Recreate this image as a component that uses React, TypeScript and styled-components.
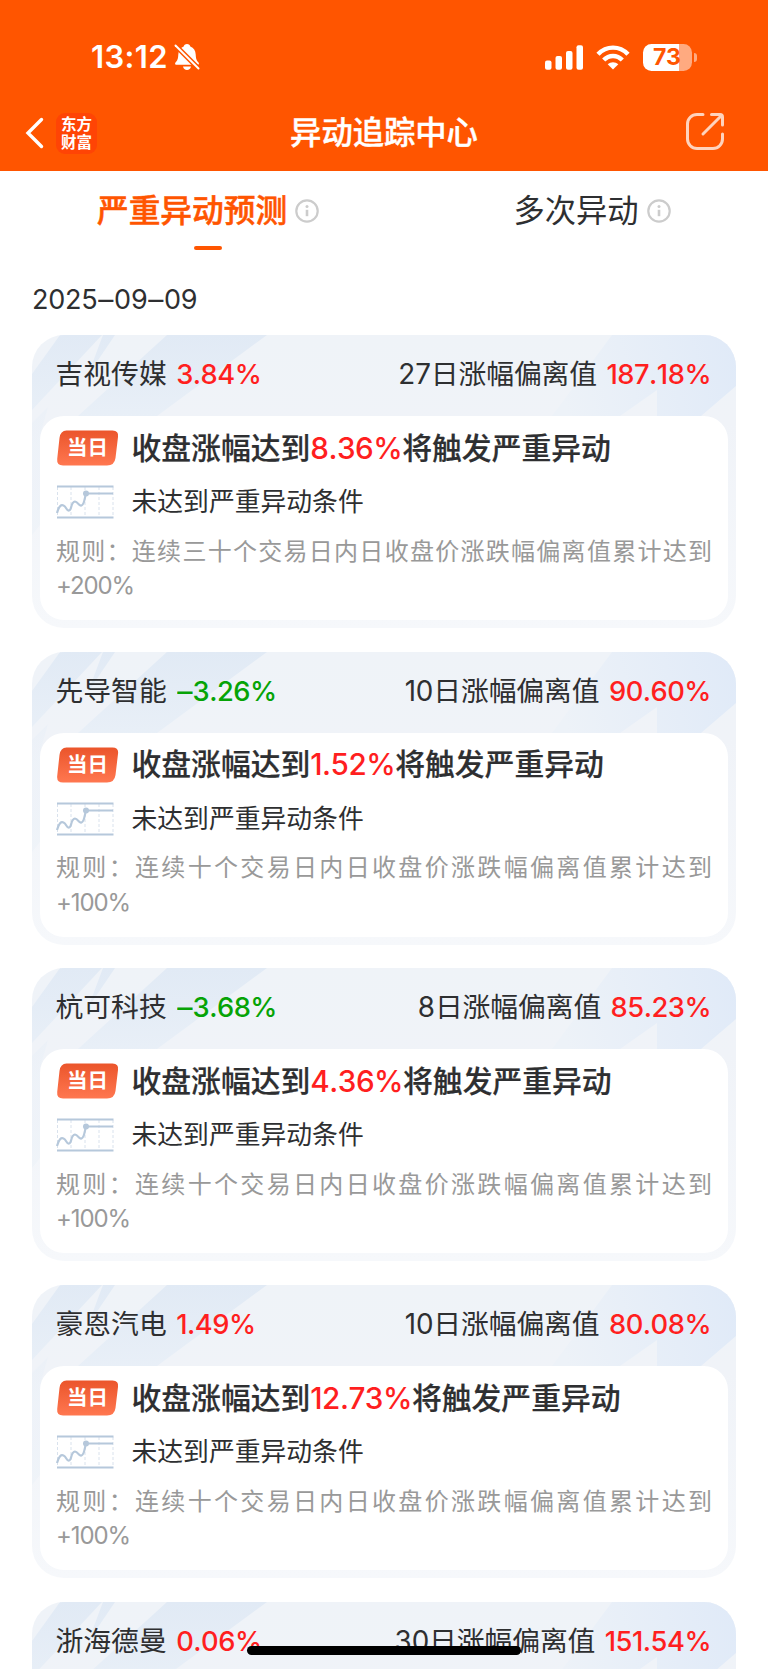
import React from "react";
import styled, { createGlobalStyle } from "styled-components";

const GlobalStyle = createGlobalStyle`
  * { box-sizing: border-box; }
  html, body { margin: 0; padding: 0; background: #fff; }
  body {
    height: 1669px;
    overflow: hidden;
    font-family: Inter, "Noto Sans CJK SC", sans-serif;
    color: #2e2f31;
  }
`;

const Screen = styled.main`
  position: relative;
  width: 768px;
  height: 1669px;
  overflow: hidden;
  background: #fff;
`;

const Header = styled.header`
  height: 171px;
  background: #ff5500;
  color: #fff;
`;

const StatusBar = styled.div`
  display: flex;
  justify-content: space-between;
  height: 95px;
  padding: 19px 71px 0 91px;
`;

const StatusGroup = styled.div<{ $gap: number }>`
  display: flex;
  align-items: center;
  height: 76px;
  gap: ${(p) => p.$gap}px;
`;

const Clock = styled.span`
  width: 77px;
  font-size: 31px;
  font-weight: 600;
  line-height: 40px;
  letter-spacing: 0.35px;
  white-space: nowrap;
`;

const Battery = styled.div`
  display: flex;
  align-items: center;
  gap: 2px;
`;

const BatteryBody = styled.div`
  width: 49px;
  height: 27px;
  padding-right: 1px;
  border-radius: 8.5px;
  background: linear-gradient(90deg, #fff 73%, #ffaa80 73%);
  color: #ff5500;
  font-size: 23px;
  font-weight: 700;
  line-height: 27px;
  text-align: center;
`;

const BatteryCap = styled.div`
  width: 3px;
  height: 9px;
  border-radius: 0 4px 4px 0;
  background: #ffaa80;
`;

const NavBar = styled.div`
  display: grid;
  grid-template-columns: 1fr auto 1fr;
  align-items: center;
  height: 76px;
  padding: 0 43px 0 25px;
`;

const NavStart = styled.div`
  display: flex;
  align-items: center;
  gap: 11px;
`;

const NavEnd = styled.div`
  display: flex;
  justify-content: flex-end;
  margin-top: -3px;
`;

const BrandMark = styled.div`
  display: flex;
  flex-direction: column;
  align-items: center;
  width: 41px;
  height: 41px;
  padding-top: 1px;
  border-radius: 9px;
  background: #ff4405;
  font-family: "Noto Sans CJK SC", sans-serif;
  font-size: 15.5px;
  font-weight: 700;
  line-height: 18px;
`;

const PageTitle = styled.h1`
  margin: 0 0 0 18px;
  font-size: 31.3px;
  font-weight: 500;
  line-height: 46px;
  -webkit-text-stroke: 0.4px currentColor;
`;

const Tabs = styled.nav`
  display: grid;
  grid-template-columns: 1fr 1fr;
  height: 101px;
`;

const Tab = styled.div<{ $active?: boolean }>`
  display: flex;
  flex-direction: column;
  align-items: center;
  padding: 17px 0 0 32px;
  color: ${(p) => (p.$active ? "#ff5500" : "#2e2f31")};
  font-size: ${(p) => (p.$active ? 31.7 : 31.3)}px;
  font-weight: ${(p) => (p.$active ? 500 : 400)};
  -webkit-text-stroke: ${(p) => (p.$active ? "0.5px currentColor" : "0")};
`;

const TabLabel = styled.div`
  display: flex;
  align-items: center;
  gap: 8px;
  line-height: 46px;
`;

const TabIndicator = styled.div`
  width: 28px;
  height: 4px;
  margin-top: 12px;
  border-radius: 2px;
  background: #ff5500;
`;

const DateLabel = styled.div`
  height: 63px;
  padding: 7.6px 32px 0;
  font-size: 27px;
  line-height: 40px;
  letter-spacing: -0.2px;
`;

const Dash = styled.span`
  display: inline-block;
  margin: 0 1.6px;
  transform: scaleX(1.12);
`;

const List = styled.section`
  display: flex;
  flex-direction: column;
  gap: 23.7px;
  padding: 0 32px;
`;

const Card = styled.article`
  display: grid;
  flex: none;
  height: 293px;
  overflow: hidden;
  border-radius: 32px;
  background: linear-gradient(180deg, #eff3f8 0%, #f0f3f8 30%, #f6f8fb 100%);
  > * { grid-area: 1 / 1; }
`;

const CardBody = styled.div`
  display: flex;
  flex-direction: column;
  padding: 0 8px 8px;
`;

const CardHeader = styled.div`
  display: flex;
  align-items: center;
  justify-content: space-between;
  height: 81px;
  padding: 0 17px 2px 15.5px;
  font-size: 27.8px;
  line-height: 40px;
  white-space: nowrap;
`;

const Metric = styled.div`
  display: flex;
  align-items: baseline;
  gap: 9.5px;
`;

const Value = styled.span<{ $down?: boolean }>`
  color: ${(p) => (p.$down ? "#06a306" : "#ff1f1f")};
  font-size: 27.3px;
  font-weight: 500;
  font-kerning: none;
  letter-spacing: -0.5px;
`;

const Span = styled.span`
  letter-spacing: -0.1px;
`;

const Panel = styled.div`
  display: flex;
  flex-direction: column;
  height: 204px;
  padding: 14px 16px 16px;
  border-radius: 24px;
  background: #fff;
`;

const PanelRow = styled.div<{ $height: number; $top?: number }>`
  display: grid;
  grid-template-columns: 75.5px 1fr;
  grid-template-rows: 100%;
  align-items: center;
  height: ${(p) => p.$height}px;
  margin-top: ${(p) => p.$top ?? 0}px;
  white-space: nowrap;
`;

const Badge = styled.div`
  display: grid;
  align-items: center;
  justify-items: center;
  width: 63px;
  height: 36px;
  color: #fff;
  font-size: 20.5px;
  font-weight: 700;
  line-height: 36px;
  > * { grid-area: 1 / 1; }
`;

const Trigger = styled.div`
  font-size: 29.8px;
  font-weight: 500;
  line-height: 37px;
  -webkit-text-stroke: 0.2px currentColor;
`;

const Threshold = styled.span`
  color: #ff1f1f;
  font-size: 29.7px;
  font-kerning: none;
  letter-spacing: -0.5px;
  -webkit-text-stroke: 0;
`;

const Condition = styled.div`
  font-size: 25.8px;
  line-height: 34px;
`;

const Rule = styled.p`
  width: 656px;
  margin: 15.5px 0 0;
  color: #999;
  font-size: 24px;
  line-height: 34.6px;
  text-align: justify;
`;

const Limit = styled.span`
  letter-spacing: -1.1px;
`;

const HomeIndicator = styled.div`
  position: absolute;
  left: 247px;
  top: 1646px;
  width: 274px;
  height: 9px;
  border-radius: 5px;
  background: #000;
`;

const BellOff = () => (
  <svg width="26" height="28" viewBox="0 0 26 28">
    <path d="M13 1c1.9 0 3 1 3.3 2.4 3.5 1.2 5.2 4.2 5.4 8 .2 4.4.8 5.9 2.8 8 .9 1 .3 2.4-.9 2.4H2.500c-1.300 0-1.900-1.400-1-2.400 2-2.100 2.600-3.600 2.800-8 .2-3.800 1.900-6.800 5.400-8C10 2 11.100 1 13 1Z" fill="#fff" />
    <path d="M9 23.500h8c-.4 2.200-2 3.500-4 3.500s-3.600-1.300-4-3.500Z" fill="#fff" />
    <path d="M0 1 26 27" stroke="#ff5500" strokeWidth="5" />
    <path d="M1.500 2.500 24.500 25.500" stroke="#fff" strokeWidth="2" strokeLinecap="round" />
  </svg>
);

const Signal = () => (
  <svg width="38" height="25" viewBox="0 0 38 25" fill="#fff">
    <rect x="0" y="15.500" width="6.500" height="9.300" rx="2" />
    <rect x="10.500" y="11" width="6.500" height="13.800" rx="2" />
    <rect x="21" y="6" width="6.500" height="18.800" rx="2" />
    <rect x="31.500" y="0.300" width="6.500" height="24.500" rx="2" />
  </svg>
);

const Wifi = () => (
  <svg width="34" height="25" viewBox="0 0 34 25">
    <g fill="none" stroke="#fff" strokeWidth="4.400">
      <path d="M2 9.200C10.500 .400 23.500 .400 32 9.200" />
      <path d="M7.700 15C13 9.600 21 9.600 26.300 15" />
    </g>
    <path d="M17 24.500 11.700 19.300C14.700 16.500 19.300 16.500 22.300 19.300Z" fill="#fff" />
  </svg>
);

const BackArrow = () => (
  <svg width="20" height="32" viewBox="0 0 20 32">
    <path d="M16.500 2.500 3 16 16.500 29.500" fill="none" stroke="#fff" strokeWidth="3.400" strokeLinecap="round" />
  </svg>
);

const ShareIcon = () => (
  <svg width="40" height="40" viewBox="0 0 40 40" fill="none" stroke="#ffd3bd" strokeWidth="3" strokeLinecap="round" strokeLinejoin="round">
    <path d="M18 2.500H12A9.500 9.500 0 0 0 2.500 12V27A9.500 9.500 0 0 0 12 36.500H28A9.500 9.500 0 0 0 37.500 27V22" />
    <path d="M26.500 2.500H35A2.500 2.500 0 0 1 37.500 5V13M36.500 3.500 18 22" />
  </svg>
);

const InfoIcon = () => (
  <svg width="24" height="24" viewBox="0 0 24 24">
    <circle cx="12" cy="12" r="10.700" fill="none" stroke="#ccc" strokeWidth="2.200" />
    <circle cx="12" cy="7.500" r="1.500" fill="#ccc" />
    <path d="M12 10.800V17.200" stroke="#ccc" strokeWidth="2.600" />
  </svg>
);

const Streaks = ({ id }: { id: string }) => (
  <svg width="704" height="293" viewBox="0 0 704 293">
    <defs>
      <linearGradient id={`${id}-l`} gradientUnits="userSpaceOnUse" x1="0" y1="0" x2="0" y2="110">
        <stop offset="0" stopColor="#e1eaf5" />
        <stop offset="1" stopColor="#ebf1f8" />
      </linearGradient>
      <linearGradient id={`${id}-r`} gradientUnits="userSpaceOnUse" x1="704" y1="10" x2="530" y2="60">
        <stop offset="0" stopColor="#e0eaf8" />
        <stop offset="1" stopColor="#edf2f8" />
      </linearGradient>
    </defs>
    <g fill={`url(#${id}-l)`}>
      <path d="M28 0H70L0 75V39Z" />
      <path d="M71 0H83L56 40Z" />
      <path d="M135 0H235L125 81H46Z" />
      <path d="M0 88 16 72 8 100V190L0 200Z" opacity=".5" />
    </g>
    <path d="M580 0H704V51L669 81H625V55L588 81H520Z" fill={`url(#${id}-r)`} />
  </svg>
);

const BadgeShape = ({ id }: { id: string }) => (
  <svg width="63" height="36" viewBox="0 0 63 36">
    <defs>
      <linearGradient id={`${id}-b`} x1="0" y1="0" x2="0" y2="1">
        <stop offset="0" stopColor="#eb552b" />
        <stop offset="1" stopColor="#ff7750" />
      </linearGradient>
    </defs>
    <path d="M10.500 .500H56.500Q63 .500 62 7L59.500 28Q58.500 35.500 51 35.500H7Q.500 35.500 1.200 29L3.500 8Q4.500 .500 10.500 .500Z" fill={`url(#${id}-b)`} />
  </svg>
);

const TrendIcon = () => (
  <svg width="58" height="34" viewBox="0 0 58 34" fill="none">
    <path d="M1.500 2V32M15 2V32M29 2V32M43 2V32M57 2V32" stroke="#d9e2ed" strokeWidth="1" strokeDasharray="3 2" />
    <path d="M1 1.500H57.500M1 32.500H57.500" stroke="#b6c8db" strokeWidth="2" />
    <path d="M1 28C3 21 5 19.500 7.500 20.500 10.500 21.800 10.500 26 13 25.500 16 25 14.500 17 19 16.500 22 16.500 22.500 21.500 25.500 20.500 28.500 19.500 28.500 13 30 8.500H57" stroke="#b6c8db" strokeWidth="2.200" />
    <circle cx="30" cy="8.500" r="3" fill="#b6c8db" />
  </svg>
);

interface Stock {
  name: string;
  change: string;
  down?: boolean;
  span: string;
  deviation: string;
  threshold: string;
  days: string;
  limit: string;
}

const stocks: Stock[] = [
  { name: "吉视传媒", change: "3.84%", span: "27日涨幅偏离值", deviation: "187.18%", threshold: "8.36%", days: "三十", limit: "+200%" },
  { name: "先导智能", change: "–3.26%", down: true, span: "10日涨幅偏离值", deviation: "90.60%", threshold: "1.52%", days: "十", limit: "+100%" },
  { name: "杭可科技", change: "–3.68%", down: true, span: "8日涨幅偏离值", deviation: "85.23%", threshold: "4.36%", days: "十", limit: "+100%" },
  { name: "豪恩汽电", change: "1.49%", span: "10日涨幅偏离值", deviation: "80.08%", threshold: "12.73%", days: "十", limit: "+100%" },
  { name: "浙海德曼", change: "0.06%", span: "30日涨幅偏离值", deviation: "151.54%", threshold: "", days: "", limit: "" },
];

/* Widens the dashes inside a numeric string, leaving the digits as they are. */
const Figures = ({ text }: { text: string }) => (
  <>
    {text.split("–").map((part, i) => (
      <React.Fragment key={i}>
        {i > 0 && <Dash>–</Dash>}
        {part}
      </React.Fragment>
    ))}
  </>
);

const StockCard = ({ stock, id }: { stock: Stock; id: string }) => (
  <Card>
    <Streaks id={id} />
    <CardBody>
      <CardHeader>
        <Metric>
          <span>{stock.name}</span>
          <Value $down={stock.down}>
            <Figures text={stock.change} />
          </Value>
        </Metric>
        <Metric>
          <Span>{stock.span}</Span>
          <Value>{stock.deviation}</Value>
        </Metric>
      </CardHeader>
      {stock.threshold && (
        <Panel>
          <PanelRow $height={36}>
            <Badge>
              <BadgeShape id={id} />
              <span>当日</span>
            </Badge>
            <Trigger>
              收盘涨幅达到<Threshold>{stock.threshold}</Threshold>将触发严重异动
            </Trigger>
          </PanelRow>
          <PanelRow $height={34} $top={19}>
            <TrendIcon />
            <Condition>未达到严重异动条件</Condition>
          </PanelRow>
          <Rule>
            规则：连续{stock.days}个交易日内日收盘价涨跌幅偏离值累计达到
            <Limit>{stock.limit}</Limit>
          </Rule>
        </Panel>
      )}
    </CardBody>
  </Card>
);

export default function App() {
  return (
    <Screen>
      <GlobalStyle />
      <Header>
        <StatusBar>
          <StatusGroup $gap={6}>
            <Clock>13:12</Clock>
            <BellOff />
          </StatusGroup>
          <StatusGroup $gap={13}>
            <Signal />
            <Wifi />
            <Battery>
              <BatteryBody>73</BatteryBody>
              <BatteryCap />
            </Battery>
          </StatusGroup>
        </StatusBar>
        <NavBar>
          <NavStart>
            <BackArrow />
            <BrandMark>
              <span>东方</span>
              <span>财富</span>
            </BrandMark>
          </NavStart>
          <PageTitle>异动追踪中心</PageTitle>
          <NavEnd>
            <ShareIcon />
          </NavEnd>
        </NavBar>
      </Header>
      <Tabs>
        <Tab $active>
          <TabLabel>
            严重异动预测
            <InfoIcon />
          </TabLabel>
          <TabIndicator />
        </Tab>
        <Tab>
          <TabLabel>
            多次异动
            <InfoIcon />
          </TabLabel>
        </Tab>
      </Tabs>
      <DateLabel>
        <Figures text="2025–09–09" />
      </DateLabel>
      <List>
        {stocks.map((stock, i) => (
          <StockCard key={stock.name} stock={stock} id={`card${i}`} />
        ))}
      </List>
      <HomeIndicator />
    </Screen>
  );
}
